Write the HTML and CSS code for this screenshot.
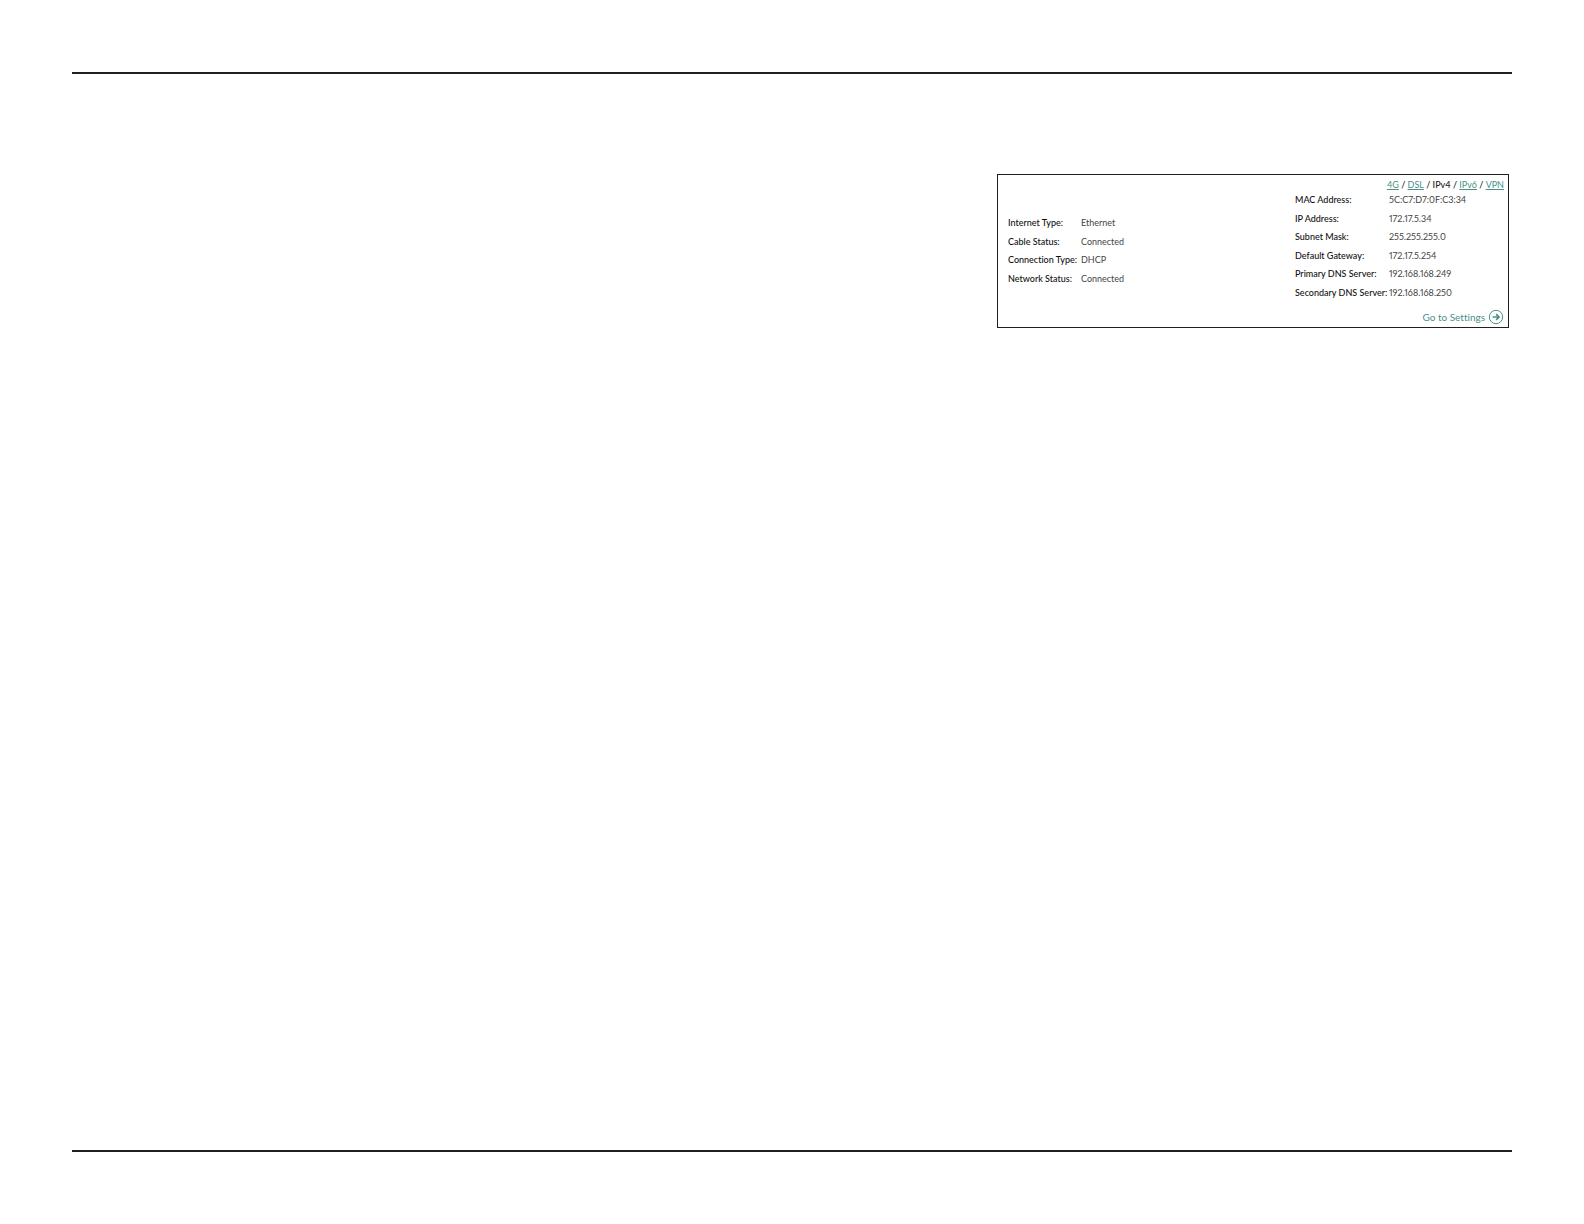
FILE: index.html
```html
<!DOCTYPE html>
<html lang="en">
<head>
  <meta charset="UTF-8">
  <title>Internet Status</title>
  <meta name="viewport" content="width=device-width, initial-scale=1.0">
  <link rel="stylesheet" href="styles.css">
</head>
<body>

  <main class="page">
    <section class="panel">
      <table class="info info-left">
        <tr><th scope="row">Internet Type:</th><td>Ethernet</td></tr>
        <tr><th scope="row">Cable Status:</th><td>Connected</td></tr>
        <tr><th scope="row">Connection Type:</th><td>DHCP</td></tr>
        <tr><th scope="row">Network Status:</th><td>Connected</td></tr>
      </table>

      <div class="details">
        <nav class="tabs">
          <a href="#">4G</a> / <a href="#">DSL</a> / <span>IPv4</span> / <a href="#">IPv6</a> / <a href="#">VPN</a>
        </nav>
        <table class="info info-right">
          <tr><th scope="row">MAC Address:</th><td>5C:C7:D7:0F:C3:34</td></tr>
          <tr><th scope="row">IP Address:</th><td>172.17.5.34</td></tr>
          <tr><th scope="row">Subnet Mask:</th><td>255.255.255.0</td></tr>
          <tr><th scope="row">Default Gateway:</th><td>172.17.5.254</td></tr>
          <tr><th scope="row">Primary DNS Server:</th><td>192.168.168.249</td></tr>
          <tr><th scope="row">Secondary DNS Server:</th><td>192.168.168.250</td></tr>
        </table>
        <a class="settings" href="#">
          Go to Settings
          <svg width="16" height="16" viewBox="0 0 16 16" fill="none" stroke="currentColor">
            <circle cx="8" cy="8" r="6.7" stroke-width="1"/>
            <path d="M4.6 8h6M8.2 5.2L11 8l-2.8 2.8" stroke-width="1.7"/>
          </svg>
        </a>
      </div>
    </section>
  </main>

</body>
</html>
```

FILE: styles.css
```css
* {
  box-sizing: border-box;
}

body {
  font-family: Lato, sans-serif;
  font-size: 9px;
  font-variant-ligatures: none;
  font-variant-numeric: proportional-nums;
  margin: 0;
  padding: 72px;
  min-height: 100vh;
  display: flex;
  background-color: #fff;
  color: #222;
}

.page {
  flex: 1;
  border-top: 2px solid #231f20;
  border-bottom: 2px solid #231f20;
  padding: 100px 3px;
}

.panel {
  display: flex;
  justify-content: space-between;
  align-items: flex-start;
  width: 512px;
  max-width: 100%;
  margin-left: auto;
  padding: 4px 4px 2px 10px;
  border: 1px solid #231f20;
}

.info {
  border-collapse: collapse;
  line-height: 12px;
  white-space: nowrap;
}

.info th,
.info td {
  padding: 0;
  text-align: left;
}

.info th {
  font-weight: 500;
  color: #111;
}

.info td {
  color: #444;
}

.info-left {
  height: 74px;
  margin-top: 35px;
}

.info-left th {
  width: 73px;
}

.info-right {
  height: 111px;
}

.info-right th {
  width: 94px;
}

.details {
  display: flex;
  flex-direction: column;
  width: 209px;
}

.tabs {
  align-self: flex-end;
  font-weight: 500;
  line-height: 12px;
  white-space: nowrap;
}

.tabs a {
  font-weight: 400;
}

a {
  color: #4a9187;
}

.settings {
  display: flex;
  align-items: center;
  align-self: flex-end;
  gap: 3px;
  margin-top: 7px;
  font-size: 10px;
  text-decoration: none;
}
```
